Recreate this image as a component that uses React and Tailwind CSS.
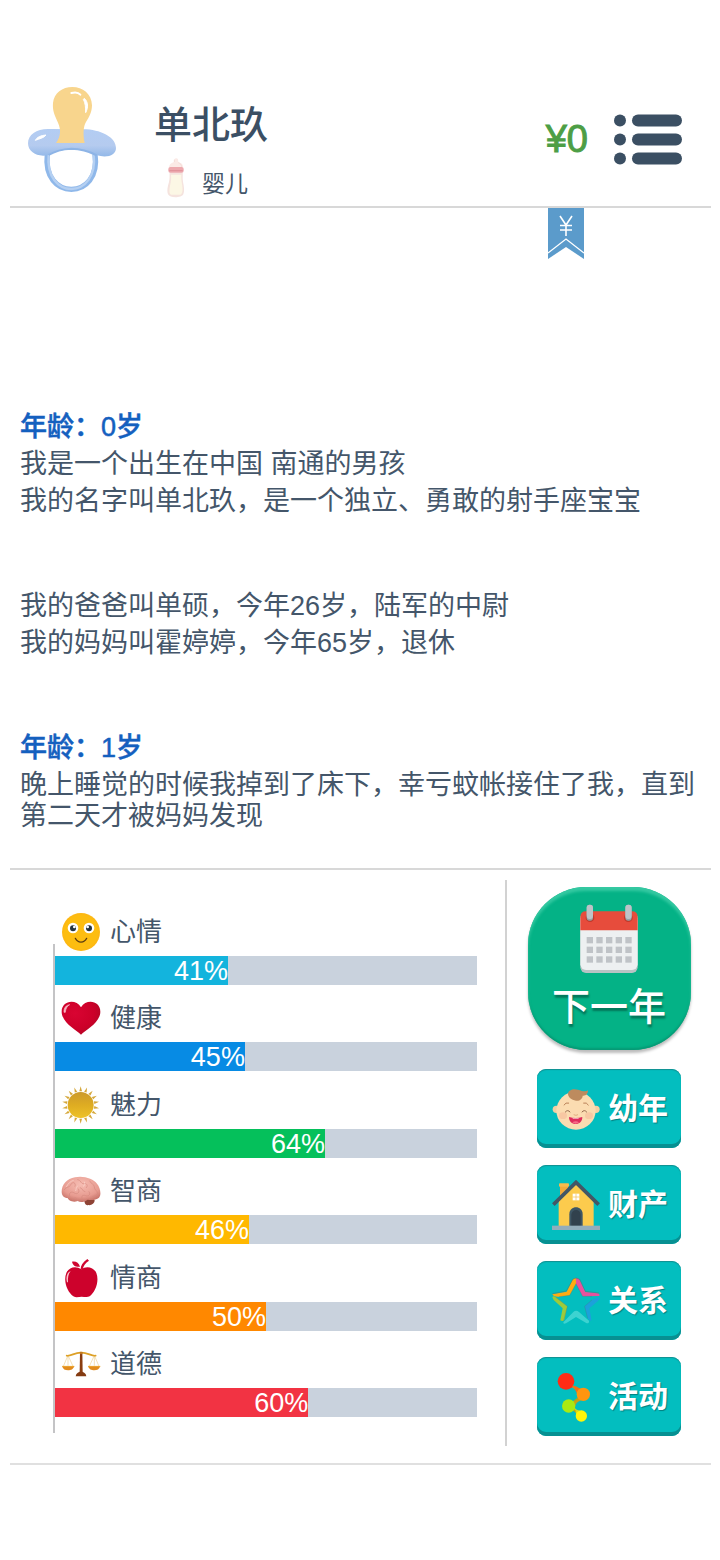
import React from "react";

function Pacifier() {
  return (
    <svg className="h-[106px] w-[88px] shrink-0" viewBox="84 48 264 318" aria-hidden="true">
      <defs>
        <linearGradient id="pacShield" x1="0" y1="0" x2="0" y2="1">
          <stop offset="0" stopColor="#b3cdf3" />
          <stop offset="0.6" stopColor="#b5cbef" />
          <stop offset="1" stopColor="#92b8e8" />
        </linearGradient>
      </defs>
      <path d="M142 252C134 322 172 358 214 358C256 358 295 322 285 252" fill="none" stroke="#8fb8ea" strokeWidth="16" />
      <path d="M146 252C139 322 176 357 214 357C254 356 289 320 281 252" fill="none" stroke="#b5d0f2" strokeWidth="7" />
      <path
        d="M84 220C84 192 112 175 150 177L260 178C310 182 348 205 348 234C348 256 322 265 290 256C262 240 232 236 214 237C192 238 165 245 146 255C112 263 84 246 84 220Z"
        fill="url(#pacShield)"
      />
      <path d="M146 255C165 243 192 237 214 236C236 236 264 242 290 256" fill="none" stroke="#8db4e6" strokeWidth="6" />
      <path
        d="M168 219C182 200 184 180 174 158C164 136 157 122 159 99C162 69 187 51 217 51C248 51 275 71 276 106C276 130 264 145 255 162C249 178 250 200 254 219Z"
        fill="#f8d58d"
      />
      <path d="M214 69C225 66 236 68 241 74" fill="none" stroke="#fff" strokeWidth="6" strokeLinecap="round" />
      <path d="M253 85C265 96 265 113 257 128C257 112 256 99 250 88Z" fill="#fff" stroke="#fff" strokeWidth="3" />
      <path d="M106 211C111 201 123 196 138 195C132 204 119 206 106 211Z" fill="#fff" stroke="#fff" strokeWidth="3" />
    </svg>
  );
}

function Bottle() {
  return (
    <svg className="h-10 w-5 shrink-0" viewBox="498 264 60 120" aria-hidden="true">
      <path d="M523 268C526 264 532 264 534 268L535 276C546 279 549 284 549 292H507C508 284 512 279 522 276Z" fill="#fbeae6" />
      <path d="M523 269V276M535 278C542 281 545 285 545 291" fill="none" stroke="#f0d5d0" strokeWidth="2" />
      <path d="M509 307H548C549 318 547 322 549 336C552 350 554 362 550 373C545 384 510 386 504 373C500 362 503 350 507 336C510 322 508 318 509 307Z" fill="#f5e3de" />
      <path d="M513 314H544C543 325 545 333 546 343C549 357 548 374 541 374H514C506 374 508 356 511 343C513 333 514 325 513 314Z" fill="#fcf7e5" />
      <rect x="505" y="291" width="46" height="17" rx="6" fill="#eda9ae" />
      <path d="M508 302H548" stroke="#e18f98" strokeWidth="3" />
    </svg>
  );
}

function MenuIcon() {
  return (
    <svg className="h-[51px] w-[68px]" viewBox="0 0 68 51" fill="#3b4f63" aria-hidden="true">
      <circle cx="6" cy="6.500" r="6" />
      <circle cx="6" cy="25.500" r="6" />
      <circle cx="6" cy="44.500" r="6" />
      <rect x="18" y="0.500" width="50" height="12" rx="6" />
      <rect x="18" y="19.500" width="50" height="12" rx="6" />
      <rect x="18" y="38.500" width="50" height="12" rx="6" />
    </svg>
  );
}

function Ribbon() {
  return (
    <svg className="h-[52px] w-9" viewBox="0 0 36 52" aria-hidden="true">
      <path d="M0 0H36V51L18 39L0 51Z" fill="#5b9bcb" />
      <path d="M0 45L18 31L36 45" fill="none" stroke="#fff" strokeWidth="1.300" />
      <path d="M12 8L18 17L24 8M18 17V28M12 17.500H24M12 22H24" fill="none" stroke="#fff" strokeWidth="1.600" />
    </svg>
  );
}

function Smile() {
  return (
    <svg className="size-10" viewBox="62 35 120 120" aria-hidden="true">
      <circle cx="122" cy="95" r="57" fill="#fdb813" />
      <circle cx="122" cy="95" r="52" fill="#fdbd10" />
      <circle cx="98" cy="83" r="16" fill="#fff" />
      <circle cx="146" cy="83" r="16" fill="#fff" />
      <circle cx="98" cy="84" r="9" fill="#26353f" />
      <circle cx="146" cy="84" r="9" fill="#26353f" />
      <circle cx="102" cy="80" r="4" fill="#fff" />
      <circle cx="142" cy="80" r="4" fill="#fff" />
      <path d="M105 114C112 129 132 129 139 114" fill="none" stroke="#593a12" strokeWidth="4" strokeLinecap="round" />
    </svg>
  );
}

function Heart() {
  return (
    <svg className="size-10" viewBox="62 294 120 120" aria-hidden="true">
      <defs>
        <radialGradient id="heartFill" cx="0.35" cy="0.35" r="0.8">
          <stop offset="0" stopColor="#d90432" />
          <stop offset="0.6" stopColor="#cc0029" />
          <stop offset="1" stopColor="#a90824" />
        </radialGradient>
      </defs>
      <path d="M122 404C108 390 64 368 64 335C64 302 106 295 122 322C138 295 180 302 180 335C180 368 136 390 122 404Z" fill="url(#heartFill)" />
      <path d="M71 337C70 323 78 315 88 314C79 319 76 327 75 337Z" fill="#f9b5c2" stroke="#f9b5c2" strokeWidth="2" />
    </svg>
  );
}

const SUN_RAYS = Array.from({ length: 18 }, (_, i) => i * 20);

function Sun() {
  return (
    <svg className="size-10" viewBox="62 15 120 120" aria-hidden="true">
      <defs>
        <linearGradient id="sunFill" x1="0" y1="0" x2="0" y2="1">
          <stop offset="0" stopColor="#cc9a2c" />
          <stop offset="0.5" stopColor="#deac22" />
          <stop offset="1" stopColor="#eec227" />
        </linearGradient>
      </defs>
      {SUN_RAYS.map((a) => (
        <path key={a} d="M117 34L121 19L125 34Z" fill="#d5a73a" transform={`rotate(${a} 121 75)`} />
      ))}
      <circle cx="121" cy="75" r="39" fill="url(#sunFill)" />
    </svg>
  );
}

function Brain() {
  return (
    <svg className="size-10" viewBox="62 274 120 120" aria-hidden="true">
      <defs>
        <radialGradient id="brainFill" cx="0.5" cy="0.3" r="0.7">
          <stop offset="0" stopColor="#f6bdb3" />
          <stop offset="0.7" stopColor="#e79b90" />
          <stop offset="1" stopColor="#c8746a" />
        </radialGradient>
      </defs>
      <path d="M132 358C140 354 160 354 163 362C163 372 152 378 144 376C137 379 131 370 132 358Z" fill="#8e4335" />
      <path
        d="M64 336C64 314 80 297 104 293C128 287 160 297 170 312C180 324 184 346 176 354C168 362 150 362 142 360C132 366 122 370 112 364C98 370 84 362 82 355C70 355 64 346 64 336Z"
        fill="url(#brainFill)"
      />
      <path
        d="M72 330C80 318 86 326 92 314C98 304 108 310 104 320M88 350C84 338 94 334 102 340C112 346 120 336 114 328M112 300C124 302 120 312 130 312C140 310 144 318 138 324M126 358C120 350 128 344 136 348C146 352 152 342 146 336M148 304C152 314 162 312 162 322C162 332 172 332 172 342M98 358C104 352 112 354 112 362M120 324C128 326 126 336 134 336M156 352C162 348 166 350 170 344"
        fill="none"
        stroke="#d58a7f"
        strokeWidth="2"
        strokeLinecap="round"
      />
      <path d="M78 322C84 310 92 304 100 302M128 320C134 318 134 314 132 306M106 334C108 328 106 326 112 318" fill="none" stroke="#fbd6cd" strokeWidth="2" />
    </svg>
  );
}

function Apple() {
  return (
    <svg className="size-10" viewBox="62 23 120 120" aria-hidden="true">
      <path d="M95 34C104 31 116 36 119 49C108 51 98 47 95 34Z" fill="#cf0630" />
      <path d="M121 56C121 46 127 36 141 26L146 31C135 38 130 46 127 57Z" fill="#cf0630" />
      <path
        d="M123 57C136 46 160 49 168 68C178 94 164 126 148 138C140 142 132 139 124 139C116 139 108 143 99 138C82 126 68 94 78 68C86 49 108 46 123 57Z"
        fill="#cd022c"
      />
      <path d="M80 96C76 80 80 66 91 62C84 70 82 82 83 96Z" fill="#fac2cc" />
    </svg>
  );
}

function Scales() {
  return (
    <svg className="size-10" viewBox="62 281 120 120" aria-hidden="true">
      <path d="M83 315L69 348M83 315L98 348M162 315L147 348M162 315L176 348M83 315V346M162 315V346" fill="none" stroke="#e9c271" strokeWidth="1.500" />
      <path d="M79 316C92 318 104 306 122 307C141 306 153 318 166 316" fill="none" stroke="#dda026" strokeWidth="5" strokeLinecap="round" />
      <path d="M119 306H126L127 366H118Z" fill="#8a3d10" />
      <circle cx="122" cy="308" r="4" fill="#c27820" />
      <path d="M106 378C107 369 114 366 122 363C130 366 137 369 138 378Z" fill="#843b12" />
      <path d="M65 347H102C99 357 92 360 83 360C74 360 68 357 65 347Z" fill="#e28b1c" />
      <path d="M143 347H180C177 357 170 360 162 360C153 360 146 357 143 347Z" fill="#e28b1c" />
      <path d="M65 348H102M143 348H180" stroke="#f3b33c" strokeWidth="2" />
    </svg>
  );
}

const DAY_COLUMNS = [231, 260, 289, 318, 347];
const DAY_ROWS = [203, 232, 261];

function Calendar() {
  return (
    <svg className="h-[70px] w-[60px]" viewBox="208 104 180 210" aria-hidden="true">
      <rect x="212" y="140" width="172" height="171" rx="17" fill="#b9c3c4" />
      <rect x="212" y="130" width="172" height="172" rx="17" fill="#edf0f1" />
      <path d="M212 183V143Q212 126 229 126H367Q384 126 384 143V183Z" fill="#e74c3c" />
      {DAY_ROWS.map((y) =>
        DAY_COLUMNS.map((x) => <rect key={`${x}-${y}`} x={x} y={y} width="19" height="19" fill="#bfc3c7" />)
      )}
      <circle cx="241" cy="145" r="13" fill="#c0392b" />
      <circle cx="356" cy="145" r="13" fill="#c0392b" />
      <rect x="231" y="106" width="19" height="48" rx="9" fill="#95a2a5" />
      <rect x="231" y="106" width="19" height="43" rx="9" fill="#bdc3c7" />
      <rect x="347" y="106" width="19" height="48" rx="9" fill="#95a2a5" />
      <rect x="347" y="106" width="19" height="43" rx="9" fill="#bdc3c7" />
    </svg>
  );
}

function Baby() {
  return (
    <svg className="size-[50px]" viewBox="96 72 150 150" aria-hidden="true">
      <circle cx="109" cy="148" r="11" fill="#f3cfa3" />
      <circle cx="228" cy="148" r="11" fill="#f3cfa3" />
      <ellipse cx="168" cy="152" rx="59" ry="57" fill="#fbdcb1" />
      <ellipse cx="129" cy="167" rx="12" ry="10" fill="#f8c8a3" />
      <ellipse cx="207" cy="167" rx="12" ry="10" fill="#f8c8a3" />
      <path d="M144 101C145 89 160 85 174 89C187 93 196 97 204 91C204 103 197 108 188 107C188 116 178 124 168 122C154 119 144 111 144 101Z" fill="#bd8b5e" />
      <path d="M132 135Q137 126 146 129M191 129Q200 126 205 135" fill="none" stroke="#b98158" strokeWidth="3" strokeLinecap="round" />
      <path d="M136 156Q143 147 150 156M186 156Q193 147 200 156" fill="none" stroke="#95684b" strokeWidth="3" strokeLinecap="round" />
      <path d="M161 164Q168 168 174 164" fill="none" stroke="#e2ae80" strokeWidth="3" />
      <path d="M147 171Q167 177 187 171C187 185 178 192 167 192C156 192 147 185 147 171Z" fill="#df2e5b" />
      <path d="M156 173Q167 176 178 173L174 176H160Z" fill="#fff" />
      <path d="M157 187Q167 180 177 187Q167 195 157 187Z" fill="#f76d88" />
    </svg>
  );
}

function House() {
  return (
    <svg className="size-[50px]" viewBox="96 357 150 150" aria-hidden="true">
      <path d="M120 372H144V400L120 420Z" fill="#f2ab3a" />
      <rect x="117" y="367" width="30" height="10" rx="3" fill="#f8bb4d" />
      <path d="M116 418L168 366L221 418V495H116Z" fill="#fccb4d" />
      <path d="M148 495V460C148 432 188 432 188 460V495Z" fill="#3e5664" />
      <path d="M154 495V461C155 442 182 442 182 461V495Z" fill="#31414d" />
      <rect x="96" y="494" width="144" height="13" fill="#93adbb" />
      <path d="M100 431L168 364L236 431" fill="none" stroke="#435766" strokeWidth="11" strokeLinejoin="miter" />
      <rect x="158" y="398" width="20" height="20" fill="#fff" />
      <path d="M168 398V418M158 408H178" stroke="#f0bc52" strokeWidth="2" />
    </svg>
  );
}

function Star() {
  return (
    <svg className="size-[50px]" viewBox="96 75 150 150" aria-hidden="true">
      <path d="M97 130L140 122L158 86Q161 82 168 82V98L149 133L117 137Q100 138 97 130Z" fill="#ffab12" />
      <path d="M168 82Q176 81 179 87L196 123L232 127Q240 128 238 135L188 136L168 98Z" fill="#e8529e" />
      <path d="M97 139Q98 134 106 137L142 166L133 206Q129 213 121 208L128 172L101 147Z" fill="#9ccb3b" />
      <path d="M238 138Q240 145 234 150L208 172L214 203Q216 209 210 209L203 202L194 166L216 146Z" fill="#1ca1da" />
      <path d="M130 214L160 183Q168 176 177 183L207 209Q208 218 200 217L168 198L138 217Q129 221 130 214Z" fill="#3dd3d1" />
      <path d="M97 128L139 120L159 84L168 81L179 85L196 121L237 126" fill="none" stroke="#666258" strokeWidth="2" opacity="0.600" />
      <path d="M117 137L149 133L168 98L188 136H216M131 209L142 166L106 138M216 147L194 166L203 202" fill="none" stroke="#596770" strokeWidth="2" opacity="0.400" />
    </svg>
  );
}

function Molecule() {
  return (
    <svg className="size-[50px]" viewBox="96 363 150 150" aria-hidden="true">
      <path d="M138 391L190 430L146 465L184 494" fill="none" stroke="#b7a317" strokeWidth="6" />
      <path d="M153 407C165 398 174 412 181 412L174 430C166 422 166 409 153 407Z" fill="#ec701b" />
      <path d="M174 438C178 450 161 448 157 456L166 466C168 453 178 451 184 447Z" fill="#c8a017" />
      <path d="M156 476C172 471 164 486 170 490L181 480C174 475 166 478 164 467Z" fill="#d6dc16" />
      <circle cx="138" cy="391" r="25" fill="#ff2c16" />
      <circle cx="190" cy="430" r="20" fill="#ff950e" />
      <circle cx="146" cy="465" r="20" fill="#a9ea13" />
      <circle cx="184" cy="495" r="17" fill="#fff50a" />
    </svg>
  );
}

const STATS = [
  { id: "mood", label: "心情", value: 41, color: "bg-[#13b4dd]", Icon: Smile },
  { id: "health", label: "健康", value: 45, color: "bg-[#078be4]", Icon: Heart },
  { id: "charm", label: "魅力", value: 64, color: "bg-[#05c05b]", Icon: Sun },
  { id: "iq", label: "智商", value: 46, color: "bg-[#ffb800]", Icon: Brain },
  { id: "eq", label: "情商", value: 50, color: "bg-[#ff8800]", Icon: Apple },
  { id: "morality", label: "道德", value: 60, color: "bg-[#f23343]", Icon: Scales },
];

const ACTIONS = [
  { label: "幼年", Icon: Baby },
  { label: "财产", Icon: House },
  { label: "关系", Icon: Star },
  { label: "活动", Icon: Molecule },
];

function Stat({ id, label, value, color, Icon }) {
  return (
    <div>
      <div className="flex h-11 items-start gap-[9px] pl-1.5">
        <Icon />
        <span id={id} className="text-[26px] leading-[40px]">{label}</span>
      </div>
      <div
        role="progressbar"
        aria-labelledby={id}
        aria-valuenow={value}
        aria-valuemin={0}
        aria-valuemax={100}
        className="h-[29px] bg-[#c9d2dd]"
      >
        <div
          className={`h-full text-right text-[27px] leading-[31px] text-white ${color}`}
          style={{ width: `${value}%` }}
        >
          {value}%
        </div>
      </div>
    </div>
  );
}

function Age({ years }) {
  return (
    <h2 className="font-medium text-[#1460bf] [-webkit-text-stroke:0.5px]">年龄：{years}岁</h2>
  );
}

export default function App() {
  return (
    <div className="min-h-screen bg-white pr-[9px] pl-2.5 font-['Liberation_Sans','Noto_Sans_CJK_SC',sans-serif] text-[#44566a]">
      <header className="flex items-start border-b-2 border-[#d8d8d8] pt-[86px] pr-[29px] pl-[18px]">
        <Pacifier />
        <div className="flex flex-col pt-4 pb-2 pl-[38px]">
          <h1 className="text-[38px] leading-[46px] font-medium text-[#3b4f64]">单北玖</h1>
          <div className="mt-2.5 flex items-center gap-4 pl-3">
            <Bottle />
            <span className="pt-3 text-[23px] leading-7">婴儿</span>
          </div>
        </div>
        <div className="ml-auto flex items-center gap-[26px] pt-7">
          <span className="text-[38px] leading-[51px] text-[#4d9e45] [-webkit-text-stroke:1px]">¥0</span>
          <button type="button" aria-label="菜单">
            <MenuIcon />
          </button>
        </div>
      </header>

      <main>
        <section className="flex flex-col border-b-2 border-[#d8d8d8] pb-9">
          <button type="button" aria-label="财富" className="mr-[127px] self-end">
            <Ribbon />
          </button>
          <div className="mt-[152px] flex flex-col gap-[74px] pl-2.5 text-[27px] leading-[31px]">
            <div className="flex flex-col gap-1.5">
              <Age years={0} />
              <p>我是一个出生在中国 南通的男孩</p>
              <p>我的名字叫单北玖，是一个独立、勇敢的射手座宝宝</p>
            </div>
            <div className="flex flex-col gap-1.5">
              <p>我的爸爸叫单硕，今年26岁，陆军的中尉</p>
              <p>我的妈妈叫霍婷婷，今年65岁，退休</p>
            </div>
            <div className="flex flex-col gap-1.5">
              <Age years={1} />
              <p>晚上睡觉的时候我掉到了床下，幸亏蚊帐接住了我，直到第二天才被妈妈发现</p>
            </div>
          </div>
        </section>

        <section className="flex border-b-2 border-[#e0e0e0] pt-2.5 pb-[17px]">
          <div className="flex grow pt-8 pr-7 pb-[29px] pl-[45px]">
            <div className="relative flex grow flex-col justify-between">
              {STATS.map((stat) => (
                <Stat key={stat.id} {...stat} />
              ))}
              <div className="absolute top-8 -bottom-4 -left-0.5 w-0.5 bg-[#c4c4c6]" />
            </div>
          </div>
          <nav className="flex w-[206px] shrink-0 flex-col items-center border-l-2 border-[#d2d2d2] pt-[7px] pb-2.5">
            <button
              type="button"
              className="flex size-[163px] flex-col items-center gap-[11px] rounded-[58px] bg-[#04b286] pt-[17px] text-white shadow-[0_3px_3px_#00000044,inset_0_4px_3px_#35c9a2,inset_0_-2px_2px_#069a75]"
            >
              <Calendar />
              <span className="text-[38px] leading-[44px] font-medium [text-shadow:1px_3px_2px_#00000055]">下一年</span>
            </button>
            <div className="mt-[19px] flex flex-col gap-[17px]">
              {ACTIONS.map(({ label, Icon }) => (
                <button
                  key={label}
                  type="button"
                  className="flex h-[79px] w-36 items-center gap-1.5 rounded-[9px] bg-[#03bebf] pl-[15px] text-white shadow-[inset_0_-4px_0_#079092,inset_0_1px_1px_#128f91]"
                >
                  <Icon />
                  <span className="text-[30px] leading-9 font-bold [text-shadow:1px_1px_1px_#00000055]">{label}</span>
                </button>
              ))}
            </div>
          </nav>
        </section>
      </main>
    </div>
  );
}
